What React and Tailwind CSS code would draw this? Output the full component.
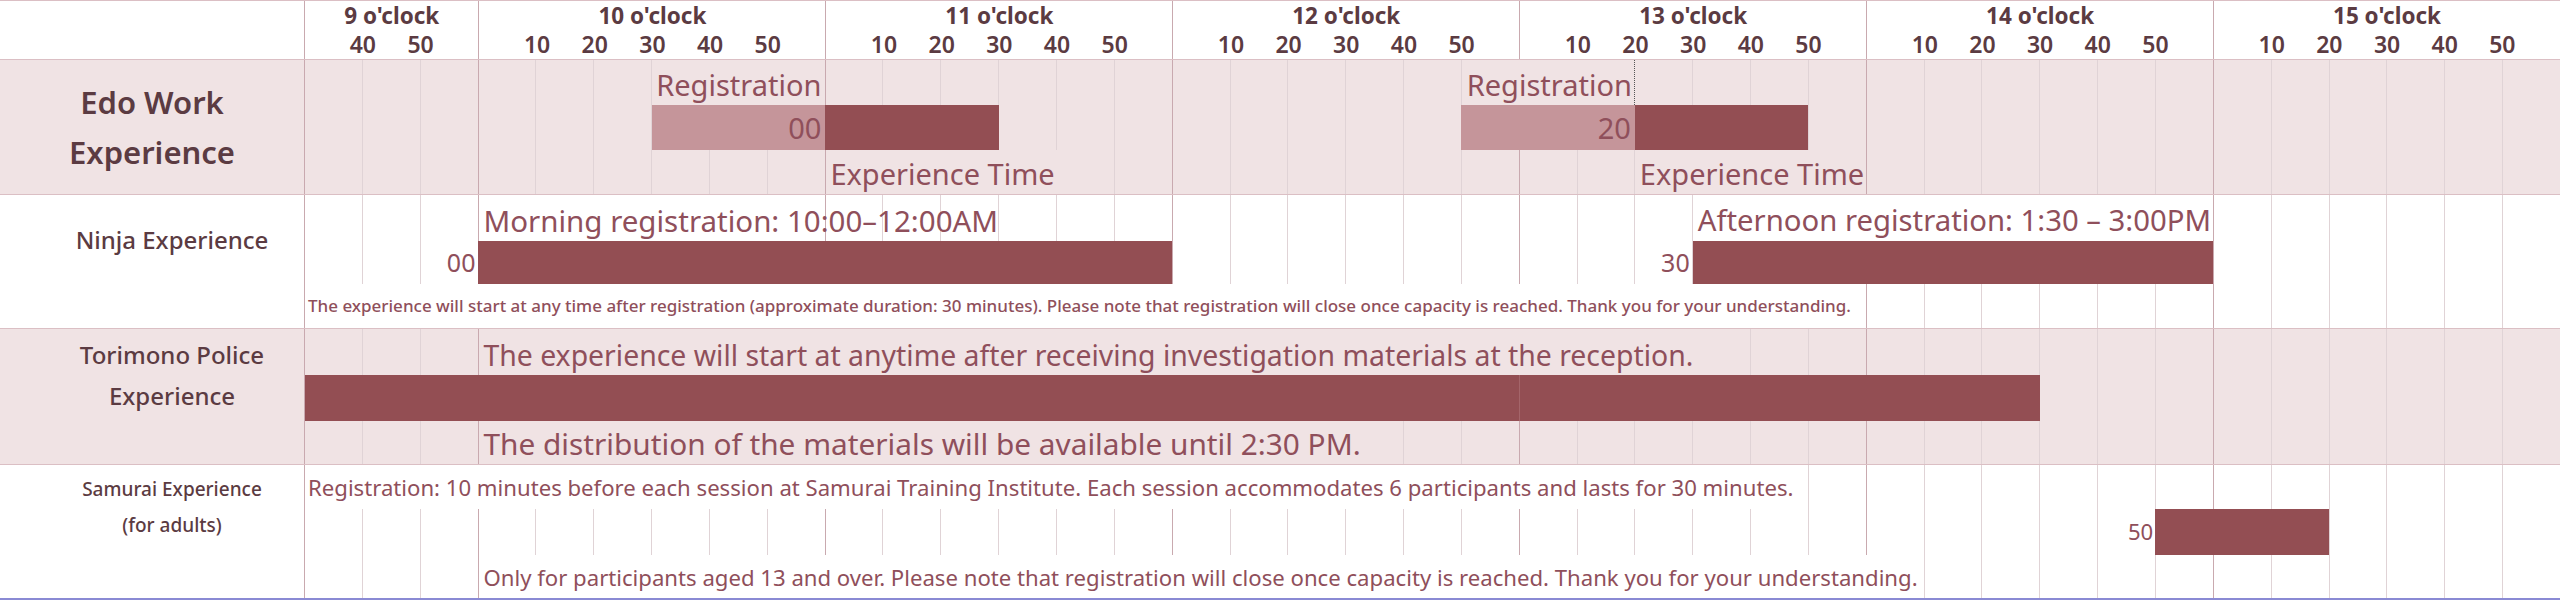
const COLS = 39;

// vertical grid lines behind a timeline row; every 6th column starts an hour
function Lines() {
  return (
    <div className="absolute inset-0 -z-10 flex">
      {Array.from({ length: COLS }).map((_, i) => (
        <div
          key={i}
          className={`flex-1 ${i === 0 ? "" : "border-l"} ${i % 6 === 3 ? "border-[#c9a9af]" : "border-[#e0d3d6]"}`}
        />
      ))}
    </div>
  );
}

const hours = [
  { label: "9 o'clock", span: "col-span-3", marks: ["40", "50", ""] },
  { label: "10 o'clock", span: "col-span-6", marks: ["10", "20", "30", "40", "50", ""] },
  { label: "11 o'clock", span: "col-span-6", marks: ["10", "20", "30", "40", "50", ""] },
  { label: "12 o'clock", span: "col-span-6", marks: ["10", "20", "30", "40", "50", ""] },
  { label: "13 o'clock", span: "col-span-6", marks: ["10", "20", "30", "40", "50", ""] },
  { label: "14 o'clock", span: "col-span-6", marks: ["10", "20", "30", "40", "50", ""] },
  { label: "15 o'clock", span: "col-span-6", marks: ["10", "20", "30", "40", "50", ""] },
];

const timeline = "relative isolate grid flex-1 grid-cols-[repeat(39,minmax(0,1fr))]";
const labelCol = "w-[305px] shrink-0 border-r border-[#c9a9af]";
const note = "flex items-center whitespace-nowrap text-[#8f4f5b]";

export default function App() {
  return (
    <div className="w-[2560px] bg-white font-['Noto_Sans',sans-serif] text-[#5b3b42]">
      {/* header */}
      <div className="flex h-[60px] border-y border-[#dbbfc4]">
        <div className={labelCol} />
        <div className="grid flex-1 grid-cols-[repeat(39,minmax(0,1fr))]">
          {hours.map((h, i) => (
            <div key={h.label} className={`${h.span} flex flex-col ${i === 0 ? "" : "border-l border-[#c9a9af]"}`}>
              <div className="h-[29px] pt-[1px] text-center text-[22.5px] font-bold leading-[28px]">{h.label}</div>
              <div className={`grid flex-1 ${i === 0 ? "grid-cols-3" : "grid-cols-6"}`}>
                {h.marks.map((m, j) => (
                  <div key={j} className="text-right text-[23px] font-semibold leading-[28px]">
                    <span className="inline-block translate-x-1/2">{m}</span>
                  </div>
                ))}
              </div>
            </div>
          ))}
        </div>
      </div>

      {/* Edo Work Experience */}
      <div className="flex h-[135px] border-b border-[#dbbfc4] bg-[#f0e3e4]">
        <div className={`${labelCol} flex flex-col items-center justify-center text-[31px] font-semibold leading-[50px]`}>
          <span>Edo Work</span>
          <span>Experience</span>
        </div>
        <div className={`${timeline} grid-rows-[45px_45px_44px] text-[29px] text-[#8f4f5b]`}>
          <Lines />
          <div className="col-span-3 col-start-7 row-start-1 ml-px flex items-center justify-end whitespace-nowrap bg-[#f0e3e4] pt-[4px] pr-[4px]">
            Registration
          </div>
          <div className="col-span-3 col-start-7 row-start-2 flex items-center justify-end bg-[#c5959a] pr-[4px]">00</div>
          <div className="col-span-3 col-start-10 row-start-2 bg-[#934e53]" />
          <div className="col-span-4 col-start-10 row-start-3 ml-px flex items-center whitespace-nowrap bg-[#f0e3e4] pt-[3px] pl-[4px]">
            Experience Time
          </div>

          <div className="col-span-3 col-start-21 row-start-1 ml-px flex items-center justify-end whitespace-nowrap border-r border-dotted border-[#555] bg-[#f0e3e4] pt-[4px] pr-[2px]">
            Registration
          </div>
          <div className="col-span-3 col-start-21 row-start-2 flex items-center justify-end bg-[#c5959a] pr-[4px]">20</div>
          <div className="col-span-3 col-start-24 row-start-2 bg-[#934e53]" />
          <div className="col-span-4 col-start-24 row-start-3 ml-px flex items-center whitespace-nowrap bg-[#f0e3e4] pt-[3px] pl-[4px]">
            Experience Time
          </div>
        </div>
      </div>

      {/* Ninja Experience */}
      <div className="flex h-[134px] border-b border-[#dbbfc4] bg-white">
        <div className={labelCol}>
          <div className="flex h-[89px] items-center justify-center pl-[40px] text-[24px] font-medium">Ninja Experience</div>
        </div>
        <div className={`${timeline} grid-rows-[46px_43px_44px]`}>
          <Lines />
          <div className={`${note} col-span-6 col-start-4 row-start-1 ml-px bg-white pt-[6px] pl-[4px] text-[29.5px]`}>
            Morning registration: 10:00–12:00AM
          </div>
          <div className={`${note} col-start-3 row-start-2 justify-end pr-[3px] text-[25px]`}>00</div>
          <div className="col-span-12 col-start-4 row-start-2 bg-[#934e53]" />
          <div className={`${note} col-span-27 col-start-1 row-start-3 bg-white pl-[3px] text-[17px] font-medium`}>
            The experience will start at any time after registration (approximate duration: 30 minutes). Please note that
            registration will close once capacity is reached. Thank you for your understanding.
          </div>
          <div className={`${note} col-start-24 row-start-2 justify-end pr-[3px] text-[25px]`}>30</div>
          <div className="col-span-9 col-start-25 row-start-2 bg-[#934e53]" />
          <div className={`${note} col-span-9 col-start-25 row-start-1 ml-px bg-white pt-[6px] pl-[4px] text-[29.3px]`}>
            Afternoon registration: 1:30 – 3:00PM
          </div>
        </div>
      </div>

      {/* Torimono Police Experience */}
      <div className="flex h-[136px] border-b border-[#dbbfc4] bg-[#f0e3e4]">
        <div className={labelCol}>
          <div className="flex h-[92px] flex-col items-center justify-center pl-[40px] text-[24px] font-medium leading-[41px]">
            <span>Torimono Police</span>
            <span>Experience</span>
          </div>
        </div>
        <div className={`${timeline} grid-rows-[46px_46px_43px]`}>
          <Lines />
          <div className={`${note} col-span-21 col-start-4 row-start-1 ml-px bg-[#f0e3e4] pt-[6px] pl-[4px] text-[28.4px]`}>
            The experience will start at anytime after receiving investigation materials at the reception.
          </div>
          <div className="col-span-21 col-start-1 row-start-2 bg-[#934e53]" />
          <div className="col-span-9 col-start-22 row-start-2 border-l border-[#a4656a] bg-[#934e53]" />
          <div className={`${note} col-span-15 col-start-4 row-start-3 ml-px bg-[#f0e3e4] pt-[3px] pl-[4px] text-[29.8px]`}>
            The distribution of the materials will be available until 2:30 PM.
          </div>
        </div>
      </div>

      {/* Samurai Experience */}
      <div className="flex h-[135px] border-b-2 border-[#8a8ad4] bg-white">
        <div className={labelCol}>
          <div className="flex h-[84px] flex-col items-center justify-center pl-[40px] text-[19px] font-medium leading-[36px]">
            <span>Samurai Experience</span>
            <span>(for adults)</span>
          </div>
        </div>
        <div className={`${timeline} grid-rows-[44px_46px_43px] text-[22.15px]`}>
          <Lines />
          <div className={`${note} col-span-26 col-start-1 row-start-1 bg-white pt-[2px] pl-[3px]`}>
            Registration: 10 minutes before each session at Samurai Training Institute. Each session accommodates 6
            participants and lasts for 30 minutes.
          </div>
          <div className={`${note} col-start-32 row-start-2 justify-end pr-[2px]`}>50</div>
          <div className="col-span-3 col-start-33 row-start-2 bg-[#934e53]" />
          <div className={`${note} col-span-25 col-start-4 row-start-3 ml-px bg-white pt-[2px] pl-[4px]`}>
            Only for participants aged 13 and over. Please note that registration will close once capacity is reached.
            Thank you for your understanding.
          </div>
        </div>
      </div>
    </div>
  );
}
